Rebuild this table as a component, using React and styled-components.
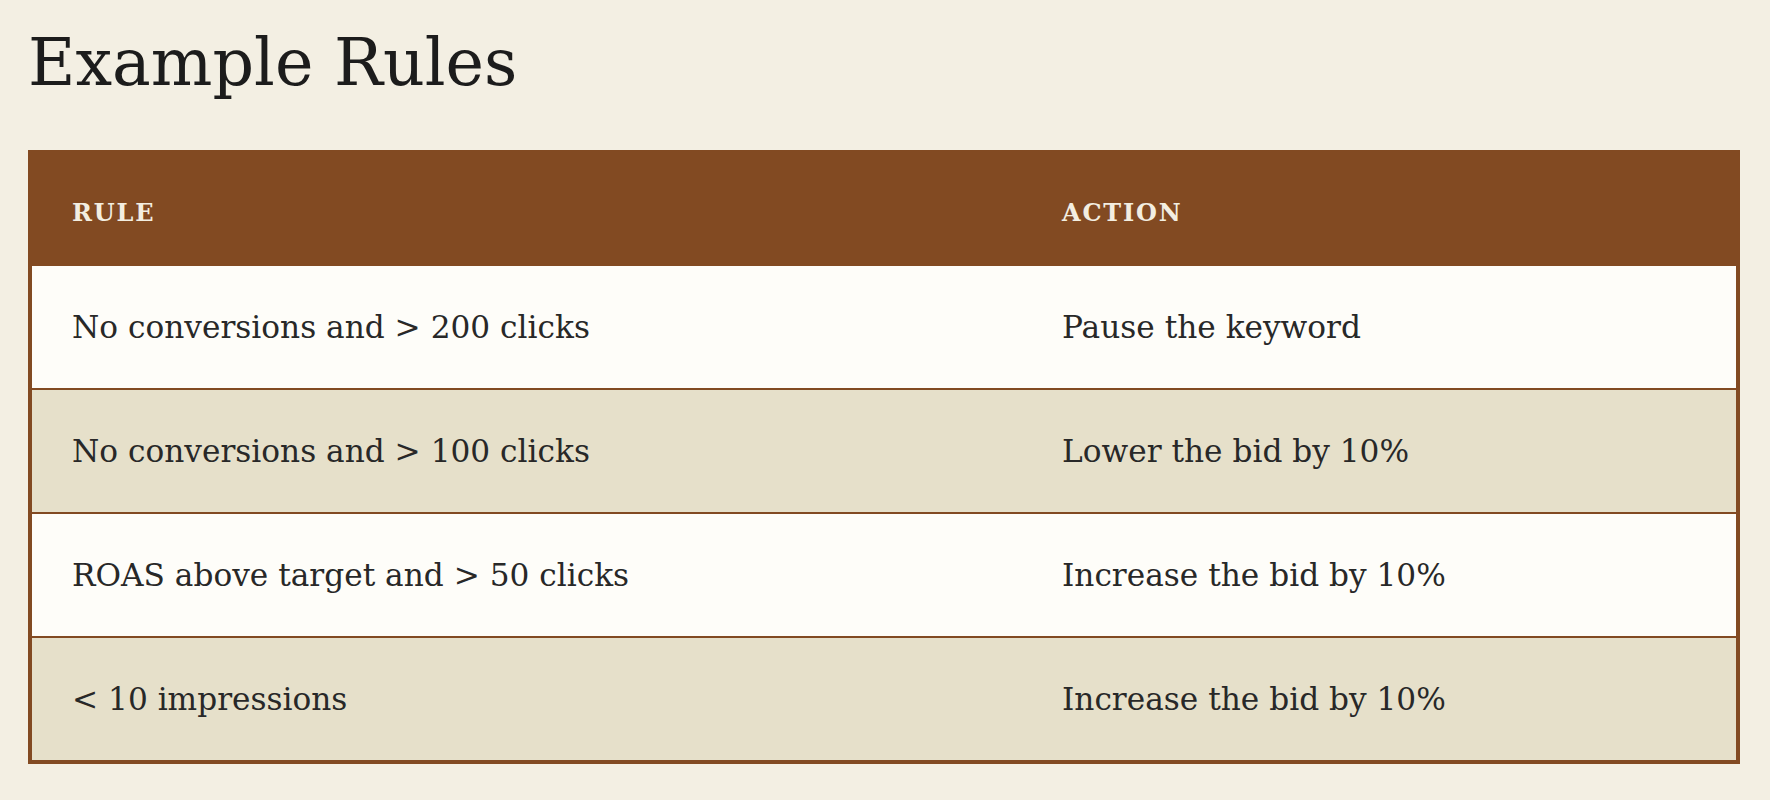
import React from "react";
import styled, { createGlobalStyle } from "styled-components";

const GlobalStyle = createGlobalStyle`
  html, body {
    margin: 0;
    padding: 0;
    background: #f3efe3;
  }
  body {
    font-family: "DejaVu Serif", "Liberation Serif", serif;
    color: #2a2a2a;
  }
`;

const Page = styled.main`
  padding: 24px 30px 40px 28px;
`;

const Title = styled.h1`
  margin: 0 0 48px;
  font-family: "DejaVu Serif", "Liberation Serif", serif;
  font-weight: 400;
  font-size: 65px;
  line-height: 78px;
  color: #1c1c1c;
  letter-spacing: 0;
`;

const Table = styled.div`
  border: 4px solid #824a22;
  background: #fefdf9;
`;

const HeadRow = styled.div`
  display: grid;
  grid-template-columns: 990px 1fr;
  align-items: center;
  height: 112px;
  padding-top: 4px;
  box-sizing: border-box;
  background: #824a22;
`;

const HeadCell = styled.div`
  padding-left: 40px;
  font-family: "DejaVu Serif", "Liberation Serif", serif;
  font-weight: 700;
  font-size: 24px;
  letter-spacing: 1.8px;
  text-transform: uppercase;
  color: #f3eee1;
`;

const Row = styled.div`
  display: grid;
  grid-template-columns: 990px 1fr;
  align-items: center;
  height: 122px;
  background: ${(p) => (p.$alt ? "#e6e0ca" : "#fefdf9")};
  border-top: ${(p) => (p.$first ? "none" : "2px solid #824a22")};
`;

const Cell = styled.div`
  padding-left: 40px;
  font-size: 31.2px;
  line-height: 1.3;
  color: #282828;
`;

const rules = [
  ["No conversions and > 200 clicks", "Pause the keyword"],
  ["No conversions and > 100 clicks", "Lower the bid by 10%"],
  ["ROAS above target and > 50 clicks", "Increase the bid by 10%"],
  ["< 10 impressions", "Increase the bid by 10%"],
];

export default function App() {
  return (
    <>
      <GlobalStyle />
      <Page>
        <Title>Example Rules</Title>
        <Table>
          <HeadRow>
            <HeadCell>Rule</HeadCell>
            <HeadCell>Action</HeadCell>
          </HeadRow>
          {rules.map(([rule, action], i) => (
            <Row key={i} $alt={i % 2 === 1} $first={i === 0}>
              <Cell>{rule}</Cell>
              <Cell>{action}</Cell>
            </Row>
          ))}
        </Table>
      </Page>
    </>
  );
}
